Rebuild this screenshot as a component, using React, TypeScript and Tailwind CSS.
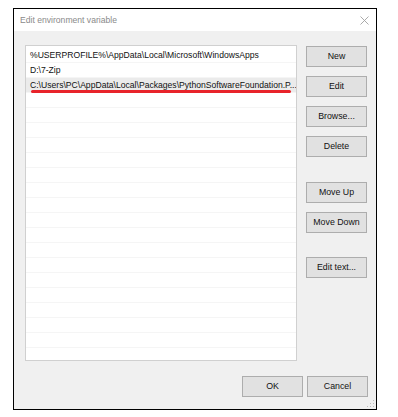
import React from "react";

const paths = [
  "%USERPROFILE%\\AppData\\Local\\Microsoft\\WindowsApps",
  "D:\\7-Zip",
  "C:\\Users\\PC\\AppData\\Local\\Packages\\PythonSoftwareFoundation.P...",
];

const sideButtons = [
  { label: "New", mt: "mt-[1px]" },
  { label: "Edit", mt: "mt-[9px]" },
  { label: "Browse...", mt: "mt-[9px]" },
  { label: "Delete", mt: "mt-[9px]" },
  { label: "Move Up", mt: "mt-[25px]" },
  { label: "Move Down", mt: "mt-[9px]" },
  { label: "Edit text...", mt: "mt-[24px]" },
];

function WinButton({ label, className = "" }: { label: string; className?: string }) {
  return (
    <button
      className={`flex h-[21px] w-[61px] items-center justify-center whitespace-nowrap border border-[#adadad] bg-[#e1e1e1] text-[8.8px] text-[#111] ${className}`}
    >
      {label}
    </button>
  );
}

export default function App() {
  return (
    <div className="h-[417px] w-[398px] bg-white pl-[13px] pt-[8px] font-['Liberation_Sans',Arial,sans-serif]">
      <div className="flex h-[402px] w-[364px] flex-col border border-black bg-[#f0f0f0]">
        {/* title bar */}
        <div className="flex h-[22px] shrink-0 items-center justify-between bg-white pl-[6px] pr-[7px]">
          <span className="text-[8.6px] text-[#8a8a8a]">Edit environment variable</span>
          <svg width="9" height="9" viewBox="0 0 9 9">
            <path d="M0.5 0.5 L8.5 8.5 M8.5 0.5 L0.5 8.5" stroke="#a0a0a0" strokeWidth="0.9" />
          </svg>
        </div>

        <div className="flex pl-[11px] pt-[14px]">
          {/* list box */}
          <div className="h-[316px] w-[272px] overflow-hidden border border-[#d0d0d0] bg-white pt-[2px]">
            {paths.map((p, i) => (
              <div
                key={p}
                className={`relative flex h-[15px] items-center whitespace-nowrap border-b border-[#f5f5f5] pl-[4px] text-[8.6px] leading-none text-[#111] ${i === 2 ? "bg-[#ebebeb]" : ""}`}
              >
                {p}
                {i === 2 ? (
                  <div className="absolute left-[5px] right-[5px] top-[12px] h-[2.5px] rounded-full bg-[#e8232a]" />
                ) : null}
              </div>
            ))}
            {Array.from({ length: 18 }).map((_, i) => (
              <div key={i} className="h-[15px] border-b border-[#f5f5f5]" />
            ))}
          </div>

          {/* side buttons */}
          <div className="ml-[9px] flex flex-col">
            {sideButtons.map((b) => (
              <WinButton key={b.label} label={b.label} className={b.mt} />
            ))}
          </div>
        </div>

        <div className="mt-[15px] flex justify-end gap-[4px] pr-[8px]">
          <WinButton label="OK" />
          <WinButton label="Cancel" />
        </div>

        <div className="mt-auto flex justify-end pb-[1px] pr-[1px]">
          <svg width="8" height="8" viewBox="0 0 8 8">
            <rect x="6" y="0" width="1" height="1" fill="#bdbdbd" />
            <rect x="3" y="3" width="1" height="1" fill="#bdbdbd" />
            <rect x="6" y="3" width="1" height="1" fill="#bdbdbd" />
            <rect x="0" y="6" width="1" height="1" fill="#bdbdbd" />
            <rect x="3" y="6" width="1" height="1" fill="#bdbdbd" />
            <rect x="6" y="6" width="1" height="1" fill="#bdbdbd" />
          </svg>
        </div>
      </div>
    </div>
  );
}
